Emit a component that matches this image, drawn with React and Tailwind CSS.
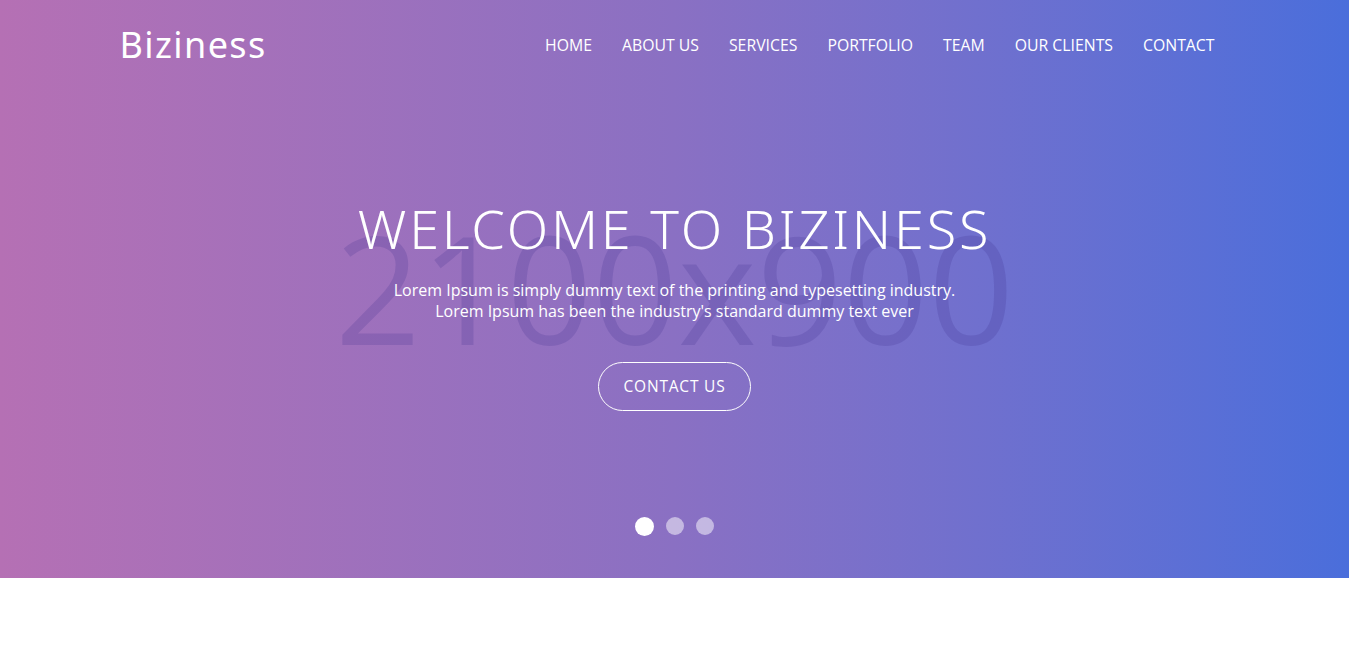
import React from 'react';

const navItems = ['Home', 'About Us', 'Services', 'Portfolio', 'Team', 'Our Clients', 'Contact'];

const Header = () => (
    <header className="mx-auto flex h-[90px] w-[1140px] items-center justify-between px-[15px]">
        <a className="text-[36px] font-normal leading-none tracking-[1.4px] text-white" style={{ fontFamily: '"Noto Sans", sans-serif' }}>
            Biziness
        </a>
        <nav className="flex pt-[2px]">
            {navItems.map(item => (
                <a key={item} className="px-[15px] text-[15.8px] uppercase text-white">
                    {item}
                </a>
            ))}
        </nav>
    </header>
);

const Hero = () => (
    <section className="relative h-[578px] overflow-hidden bg-gradient-to-r from-[#b570b4] via-[#8a70c3] to-[#4a6edb]">
        <Header />
        <div className="relative flex flex-col items-center pt-[103px]">
            <span className="pointer-events-none absolute top-[122px] select-none text-[150px] leading-none text-[#3d2f8a]/20">
                2100x900
            </span>
            <h1 className="relative text-[54px] font-light leading-[70px] tracking-[2.8px] text-white" style={{ fontFamily: '"Noto Sans", sans-serif' }}>
                WELCOME TO BIZINESS
            </h1>
            <p className="relative mt-[17px] text-center text-[16px] leading-[21px] text-white">
                Lorem Ipsum is simply dummy text of the printing and typesetting industry.
                <br />
                Lorem Ipsum has been the industry's standard dummy text ever
            </p>
            <a className="relative mt-[40px] flex h-[49px] w-[153px] items-center justify-center rounded-full border border-white text-[15.5px] tracking-[0.8px] text-white">
                CONTACT US
            </a>
        </div>
        <div className="absolute bottom-[42px] left-0 right-0 flex justify-center gap-[12px]">
            <span className="h-[19px] w-[19px] rounded-full bg-white" />
            <span className="h-[18px] w-[18px] rounded-full bg-white/50" />
            <span className="h-[18px] w-[18px] rounded-full bg-white/50" />
        </div>
    </section>
);

export default function App() {
    return (
        <div className="min-h-[654px] bg-white" style={{ fontFamily: '"Open Sans", sans-serif' }}>
            <Hero />
        </div>
    );
}
